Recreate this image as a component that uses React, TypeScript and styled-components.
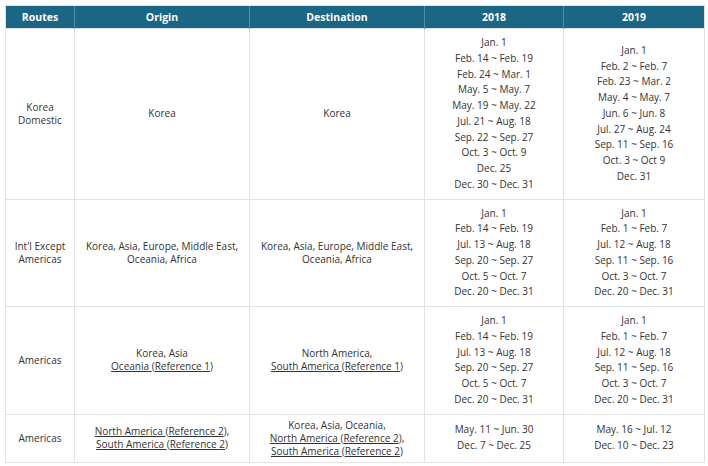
import React from 'react';
import styled, { createGlobalStyle } from 'styled-components';

interface IRouteRow {
    route: React.ReactNode;
    origin: React.ReactNode;
    destination: React.ReactNode;
    y2018: string[];
    y2019: string[];
}

const Ref = ( props: { area: string; n: number } ): JSX.Element => {
    const { area, n } = props;
    return (
        <>
            <Link>{area} </Link>(<Link>Reference {n}</Link>)
        </>
    );
};

const rows: IRouteRow[] = [
    {
        route: <>Korea<br />Domestic</>,
        origin: 'Korea',
        destination: 'Korea',
        y2018: [
            'Jan. 1', 'Feb. 14 ~ Feb. 19', 'Feb. 24 ~ Mar. 1', 'May. 5 ~ May. 7', 'May. 19 ~ May. 22',
            'Jul. 21 ~ Aug. 18', 'Sep. 22 ~ Sep. 27', 'Oct. 3 ~ Oct. 9', 'Dec. 25', 'Dec. 30 ~ Dec. 31',
        ],
        y2019: [
            'Jan. 1', 'Feb. 2 ~ Feb. 7', 'Feb. 23 ~ Mar. 2', 'May. 4 ~ May. 7', 'Jun. 6 ~ Jun. 8',
            'Jul. 27 ~ Aug. 24', 'Sep. 11 ~ Sep. 16', 'Oct. 3 ~ Oct 9', 'Dec. 31',
        ],
    },
    {
        route: <>Int'l Except<br />Americas</>,
        origin: <>Korea, Asia, Europe, Middle East,<br />Oceania, Africa</>,
        destination: <>Korea, Asia, Europe, Middle East,<br />Oceania, Africa</>,
        y2018: ['Jan. 1', 'Feb. 14 ~ Feb. 19', 'Jul. 13 ~ Aug. 18', 'Sep. 20 ~ Sep. 27', 'Oct. 5 ~ Oct. 7', 'Dec. 20 ~ Dec. 31'],
        y2019: ['Jan. 1', 'Feb. 1 ~ Feb. 7', 'Jul. 12 ~ Aug. 18', 'Sep. 11 ~ Sep. 16', 'Oct. 3 ~ Oct. 7', 'Dec. 20 ~ Dec. 31'],
    },
    {
        route: 'Americas',
        origin: <>Korea, Asia<br /><Ref area="Oceania" n={1} /></>,
        destination: <>North America,<br /><Ref area="South America" n={1} /></>,
        y2018: ['Jan. 1', 'Feb. 14 ~ Feb. 19', 'Jul. 13 ~ Aug. 18', 'Sep. 20 ~ Sep. 27', 'Oct. 5 ~ Oct. 7', 'Dec. 20 ~ Dec. 31'],
        y2019: ['Jan. 1', 'Feb. 1 ~ Feb. 7', 'Jul. 12 ~ Aug. 18', 'Sep. 11 ~ Sep. 16', 'Oct. 3 ~ Oct. 7', 'Dec. 20 ~ Dec. 31'],
    },
    {
        route: 'Americas',
        origin: <><Ref area="North America" n={2} />,<br /><Ref area="South America" n={2} /></>,
        destination: <>Korea, Asia, Oceania,<br /><Ref area="North America" n={2} />,<br /><Ref area="South America" n={2} /></>,
        y2018: ['May. 11 ~ Jun. 30', 'Dec. 7 ~ Dec. 25'],
        y2019: ['May. 16 ~ Jul. 12', 'Dec. 10 ~ Dec. 23'],
    },
];

const App = (): JSX.Element => {
    return (
        <>
            <GlobalStyle />
            <Table>
                <colgroup>
                    <col style={{ width: 69 }} />
                    <col style={{ width: 175 }} />
                    <col style={{ width: 175 }} />
                    <col style={{ width: 139 }} />
                    <col style={{ width: 141 }} />
                </colgroup>
                <thead>
                    <tr>
                        <Th>Routes</Th>
                        <Th>Origin</Th>
                        <Th>Destination</Th>
                        <Th>2018</Th>
                        <Th>2019</Th>
                    </tr>
                </thead>
                <tbody>
                    {rows.map((row, i) => (
                        <tr key={i}>
                            <Td>{row.route}</Td>
                            <Td>{row.origin}</Td>
                            <Td>{row.destination}</Td>
                            <Td $dates>
                                {row.y2018.map((d) => <DateLine key={d}>{d}</DateLine>)}
                            </Td>
                            <Td $dates>
                                {row.y2019.map((d) => <DateLine key={d}>{d}</DateLine>)}
                            </Td>
                        </tr>
                    ))}
                </tbody>
            </Table>
        </>
    );
};

export default App;


const GlobalStyle = createGlobalStyle`
    body {
        margin: 0;
        padding: 5px;
        background: #fff;
        font-family: "Open Sans", "Noto Sans", sans-serif;
    }
`;

const Table = styled.table`
    width: 699px;
    table-layout: fixed;
    border-collapse: collapse;
    font-size: 10px;
    color: #333;
    border: 1px solid #e2e2e2;
`;

const Th = styled.th`
    height: 22px;
    padding: 0 6px;
    background: #1b6585;
    color: #fff;
    font-weight: bold;
    font-size: 10.5px;
    text-align: center;
    border-left: 1px solid rgba(255, 255, 255, 0.25);
    &:first-child {
        border-left: none;
    }
`;

const Td = styled.td<{ $dates?: boolean }>`
    padding: ${(p) => (p.$dates ? '6px 6px' : '4px 6px')};
    line-height: 13px;
    text-align: center;
    vertical-align: middle;
    border: 1px solid #e2e2e2;
`;

const DateLine = styled.div`
    line-height: 15.75px;
`;

const Link = styled.span`
    text-decoration: underline;
`;
